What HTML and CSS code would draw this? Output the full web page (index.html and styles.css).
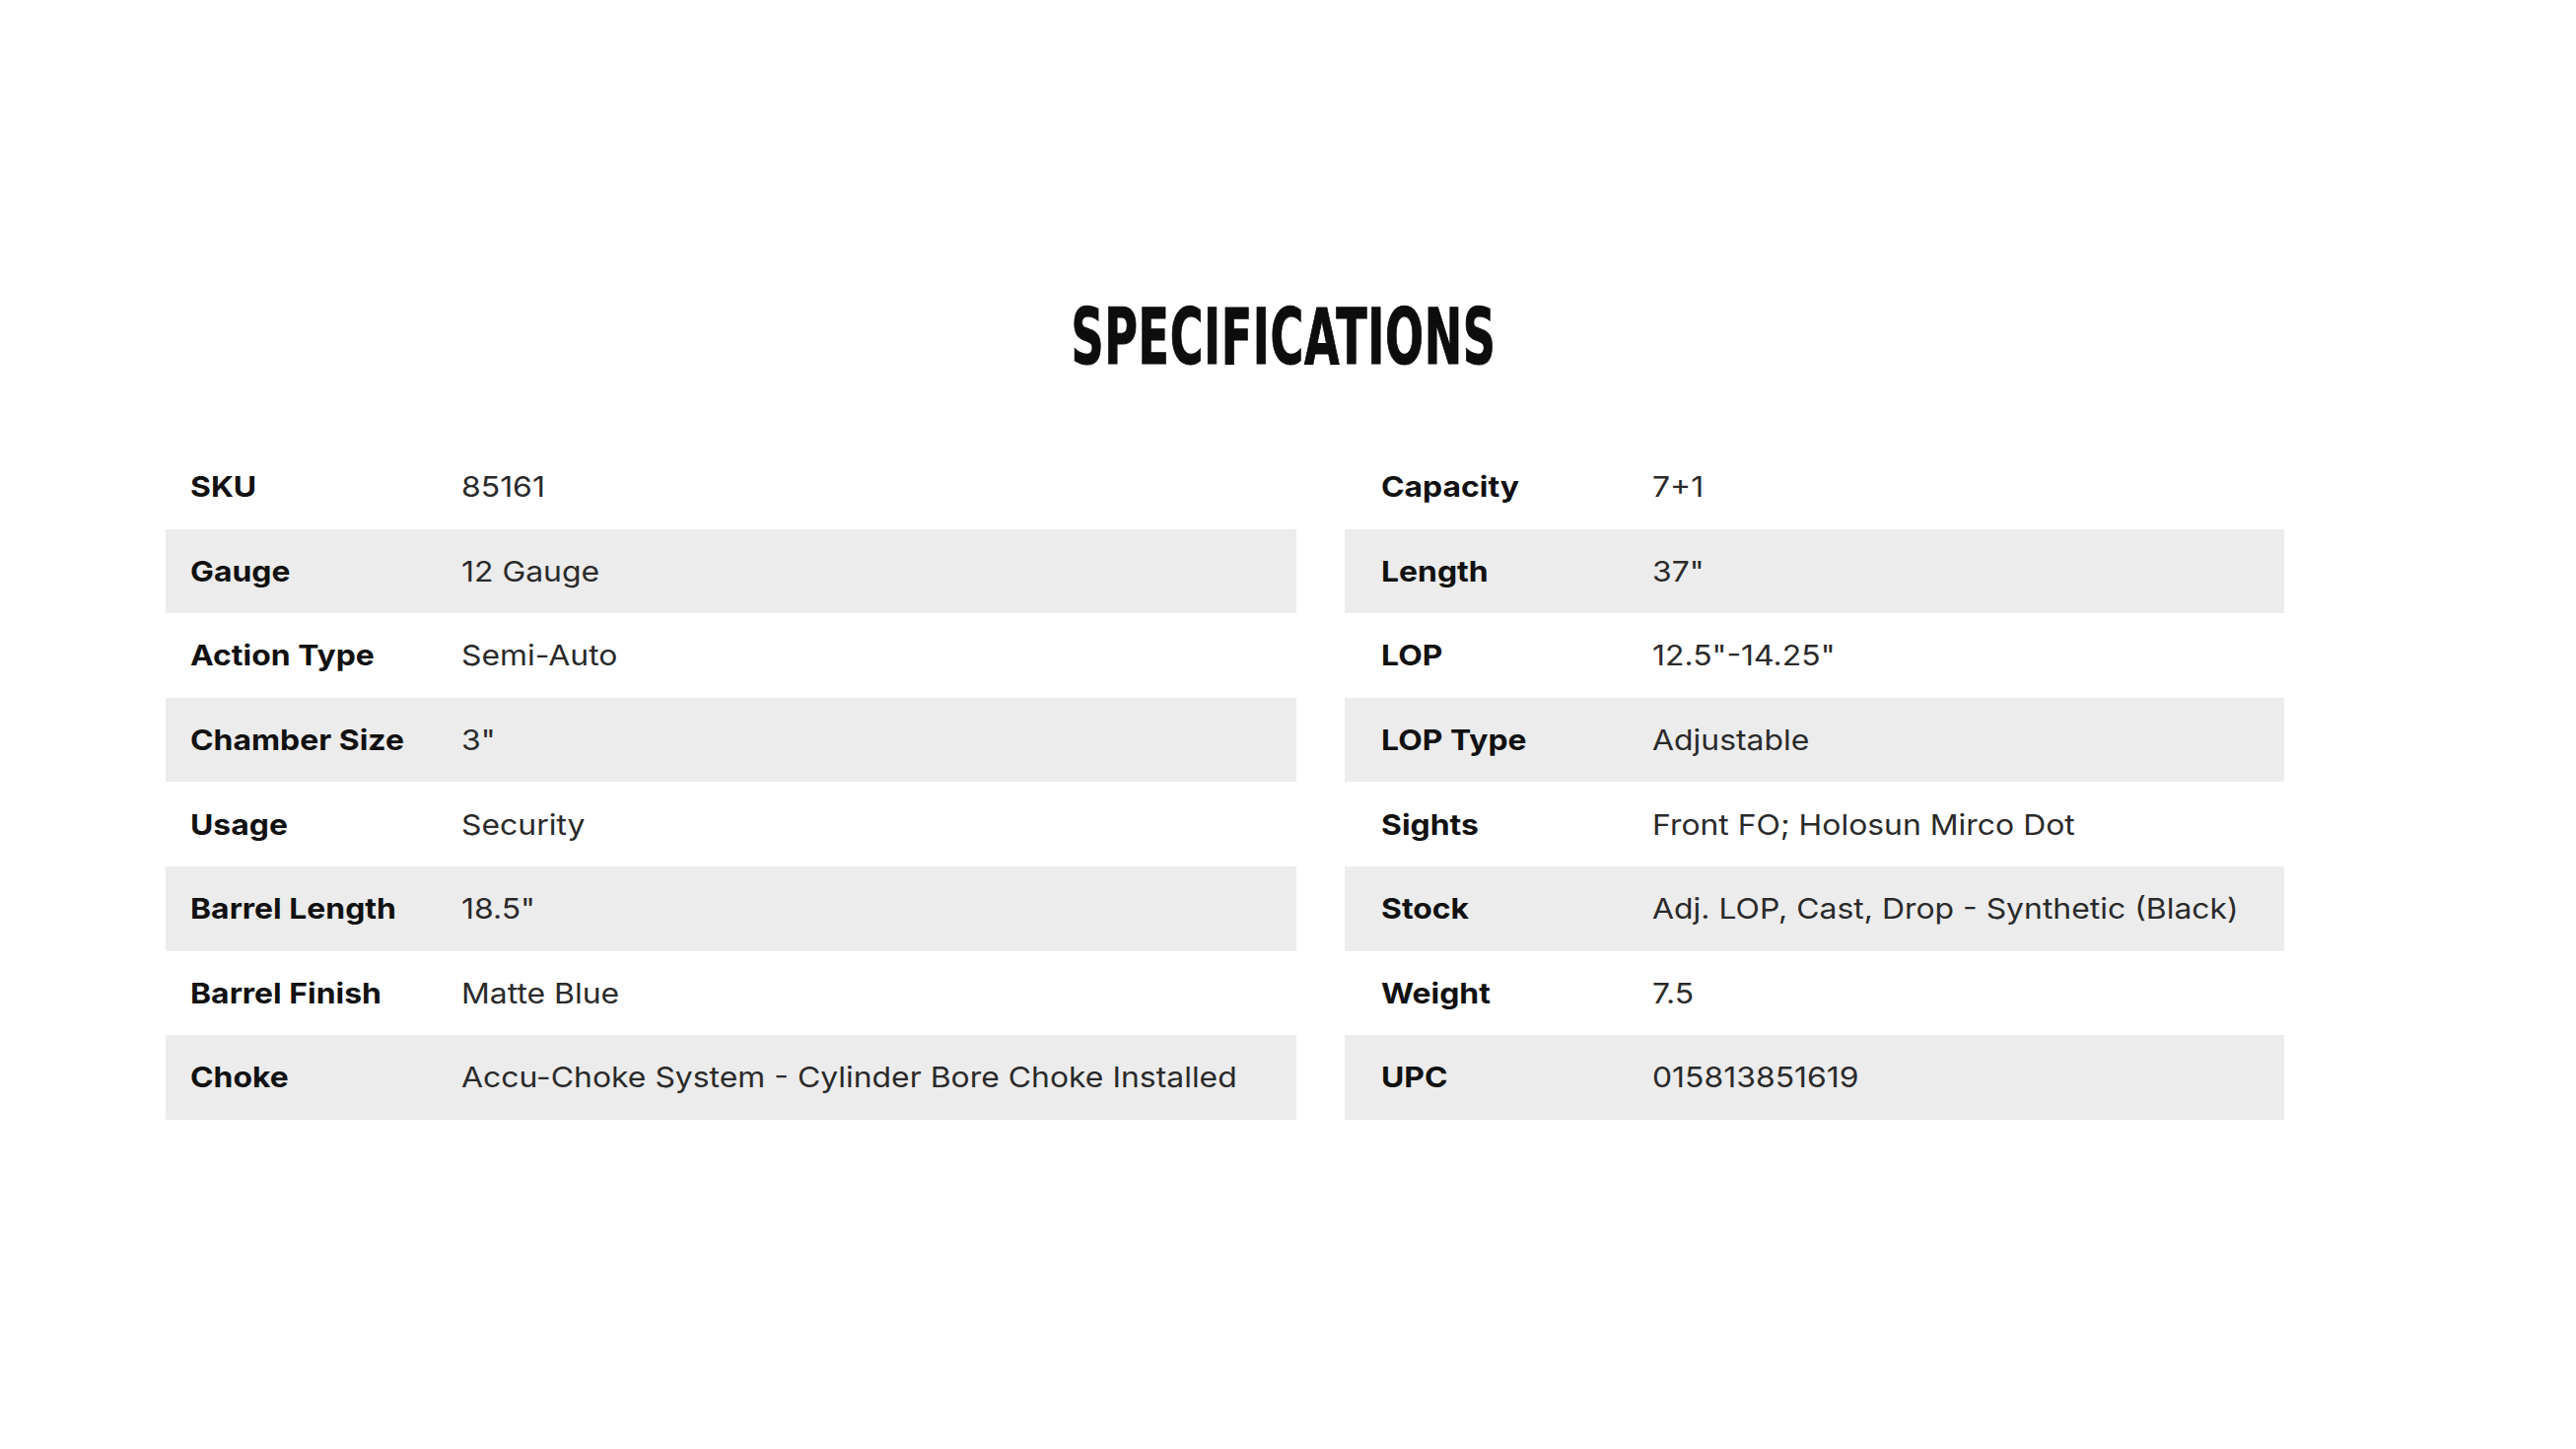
FILE: index.html
```html
<!DOCTYPE html>
<html lang="en">
<head>
<meta charset="utf-8">
<title>Specifications</title>
<link rel="stylesheet" href="styles.css">
</head>
<body>
<main class="page">
  <h2 class="title"><span class="title-text">SPECIFICATIONS</span></h2>
  <div class="tables">
    <div class="spec spec-left">
      <div class="row"><span class="label">SKU</span><span class="value">85161</span></div>
      <div class="row alt"><span class="label">Gauge</span><span class="value">12 Gauge</span></div>
      <div class="row"><span class="label">Action Type</span><span class="value">Semi-Auto</span></div>
      <div class="row alt"><span class="label">Chamber Size</span><span class="value">3"</span></div>
      <div class="row"><span class="label">Usage</span><span class="value">Security</span></div>
      <div class="row alt"><span class="label">Barrel Length</span><span class="value">18.5"</span></div>
      <div class="row"><span class="label">Barrel Finish</span><span class="value">Matte Blue</span></div>
      <div class="row alt"><span class="label">Choke</span><span class="value">Accu-Choke System - Cylinder Bore Choke Installed</span></div>
    </div>
    <div class="spec spec-right">
      <div class="row"><span class="label">Capacity</span><span class="value">7+1</span></div>
      <div class="row alt"><span class="label">Length</span><span class="value">37"</span></div>
      <div class="row"><span class="label">LOP</span><span class="value">12.5"-14.25"</span></div>
      <div class="row alt"><span class="label">LOP Type</span><span class="value">Adjustable</span></div>
      <div class="row"><span class="label">Sights</span><span class="value">Front FO; Holosun Mirco Dot</span></div>
      <div class="row alt"><span class="label">Stock</span><span class="value">Adj. LOP, Cast, Drop - Synthetic (Black)</span></div>
      <div class="row"><span class="label">Weight</span><span class="value">7.5</span></div>
      <div class="row alt"><span class="label">UPC</span><span class="value">015813851619</span></div>
    </div>
  </div>
</main>
</body>
</html>
```
FILE: styles.css
```css
html, body {
  margin: 0;
  padding: 0;
  background: #ffffff;
}

.page {
  padding-top: 303px;
  font-family: "Inter", "Roboto", "Liberation Sans", sans-serif;
}

.title {
  margin: 0;
  text-align: center;
  font-family: "DejaVu Sans Condensed", "DejaVu Sans", sans-serif;
  font-weight: 700;
  font-size: 78px;
  line-height: 78px;
  color: #0d0d0d;
  padding-right: 8px;
}

.title-text {
  display: inline-block;
  transform: scaleX(0.655);
  transform-origin: center;
  letter-spacing: 1px;
  -webkit-text-stroke: 1px #0d0d0d;
}

.tables {
  display: flex;
  gap: 49px;
  margin-top: 70px;
  padding-left: 168px;
}

.spec {
  display: flex;
  flex-direction: column;
}

.spec-left {
  width: 1147px;
}

.spec-right {
  width: 953px;
}

.row {
  display: grid;
  grid-template-columns: 275px 1fr;
  align-items: center;
  height: 85.6px;
  font-size: 29px;
}

.spec-left .row {
  padding-left: 25px;
}

.spec-right .row {
  padding-left: 37px;
}

.row.alt {
  background: #ececec;
}

.label,
.value {
  display: inline-block;
  justify-self: start;
  transform: scaleX(1.1);
  transform-origin: left center;
  white-space: nowrap;
}

.label {
  font-weight: 700;
  color: #111111;
}

.value {
  font-weight: 400;
  color: #2a2a2a;
}
```
